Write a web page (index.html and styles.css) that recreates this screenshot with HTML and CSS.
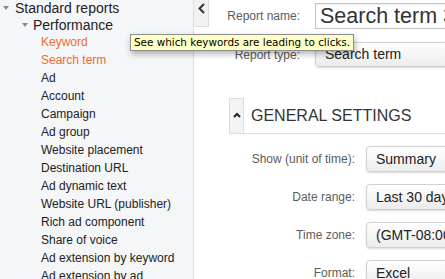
FILE: index.html
```html
<!DOCTYPE html>
<html lang="en">
<head>
  <meta charset="UTF-8" />
  <title>Report settings</title>
  <link rel="stylesheet" href="styles.css">
</head>
<body>
  <div class="page">
    <aside class="sidebar">
      <div class="tree-root"><span class="caret"></span>Standard reports</div>
      <div class="tree-group"><span class="caret"></span>Performance</div>
      <ul class="reports">
        <li class="active">Keyword</li>
        <li class="active">Search term</li>
        <li>Ad</li>
        <li>Account</li>
        <li>Campaign</li>
        <li>Ad group</li>
        <li>Website placement</li>
        <li>Destination URL</li>
        <li>Ad dynamic text</li>
        <li>Website URL (publisher)</li>
        <li>Rich ad component</li>
        <li>Share of voice</li>
        <li>Ad extension by keyword</li>
        <li>Ad extension by ad</li>
      </ul>
    </aside>

    <div class="main">
      <div class="toggle">
        <svg width="14" height="26" viewBox="0 0 14 26">
          <polyline points="10,4 5.5,8.5 10,13" fill="none" stroke="#333" stroke-width="2" />
        </svg>
      </div>

      <div class="content">
        <div class="top-form">
          <label class="label">Report name:</label>
          <input class="name-input" type="text" value="Search term 3">
          <label class="label">Report type:</label>
          <div class="select">Search term</div>
        </div>

        <div class="section">
          <div class="section-head">
            <div class="collapse">
              <svg width="14" height="34" viewBox="0 0 14 34">
                <polyline points="4,18 7,15 10,18" fill="none" stroke="#222" stroke-width="2" />
              </svg>
            </div>
            <h2>GENERAL SETTINGS</h2>
          </div>
          <div class="settings">
            <label class="label">Show (unit of time):</label>
            <div class="select">Summary</div>
            <label class="label">Date range:</label>
            <div class="select">Last 30 days</div>
            <label class="label">Time zone:</label>
            <div class="select">(GMT-08:00) Pacific Time</div>
            <label class="label">Format:</label>
            <div class="select">Excel</div>
          </div>
        </div>
      </div>
    </div>

    <div class="tooltip">See which keywords are leading to clicks.</div>
  </div>
</body>
</html>
```

FILE: styles.css
```css
body {
  margin: 0;
  font-family: 'Liberation Sans', Arial, sans-serif;
  color: #222;
  overflow: hidden;
}
.page {
  position: relative;
  display: flex;
  height: 279px;
  width: 445px;
  overflow: hidden;
}
.sidebar {
  flex: none;
  width: 193px;
  background: #f5f6f8;
  border-right: 1px solid #dcdde0;
}
.caret {
  display: inline-block;
  width: 0;
  height: 0;
  border-left: 3.5px solid transparent;
  border-right: 3.5px solid transparent;
  border-top: 4px solid #8a8a8a;
}
.tree-root {
  display: flex;
  align-items: center;
  height: 17px;
  margin-top: -1px;
  padding-left: 3px;
  font-size: 14px;
}
.tree-root .caret {
  margin-right: 6px;
}
.tree-group {
  display: flex;
  align-items: center;
  height: 17px;
  padding-left: 22px;
  font-size: 14px;
}
.tree-group .caret {
  margin-right: 5px;
}
.reports {
  list-style: none;
  margin: 0;
  padding: 0 0 0 41px;
  font-size: 12px;
  line-height: 18px;
}
.reports li {
  white-space: nowrap;
}
.reports li.active {
  color: #f26a2c;
}
.main {
  flex: 1;
  display: flex;
  min-width: 0;
}
.toggle {
  flex: none;
  align-self: flex-start;
  width: 14px;
  height: 26px;
  background: #f1f2f4;
  border-right: 1px solid #dcdde0;
  border-bottom: 1px solid #dcdde0;
}
.toggle svg {
  display: block;
}
.content {
  flex: 1;
  min-width: 0;
}
.label {
  color: #5c5c5c;
  font-size: 12px;
  text-align: right;
  white-space: nowrap;
}
.top-form {
  display: grid;
  grid-template-columns: 91px 200px;
  column-gap: 15px;
  row-gap: 13px;
  align-items: center;
  padding-top: 3px;
}
.name-input {
  box-sizing: border-box;
  width: 200px;
  height: 26px;
  margin: 0;
  padding: 0 4px;
  border: 1px solid #c4c4c4;
  box-shadow: inset 0 1px 2px rgba(0,0,0,0.08);
  font-family: 'Liberation Sans', Arial, sans-serif;
  font-size: 21.5px;
  color: #333;
}
.select {
  box-sizing: border-box;
  width: 170px;
  height: 25px;
  padding-left: 9px;
  line-height: 23px;
  border: 1px solid #d0d0d0;
  border-radius: 4px;
  background: linear-gradient(#fff, #ececec);
  box-shadow: 0 1px 2px rgba(0,0,0,0.15);
  font-size: 14px;
  color: #222;
  white-space: nowrap;
}
.section {
  margin: 31px 0 0 20px;
}
.section-head {
  display: flex;
  align-items: center;
  border-bottom: 1px solid #dedede;
}
.collapse {
  box-sizing: border-box;
  width: 15px;
  height: 35px;
  background: #f2f3f5;
  border: 1px solid #dcdde0;
  border-bottom: none;
}
.collapse svg {
  display: block;
}
.section-head h2 {
  margin: 0 0 0 7px;
  font-size: 16px;
  font-weight: normal;
  color: #333;
  white-space: nowrap;
}
.settings {
  display: grid;
  grid-template-columns: 126px 170px;
  column-gap: 11px;
  row-gap: 12px;
  align-items: center;
  padding-top: 12px;
}
.settings .select {
  height: 26px;
  line-height: 24px;
}
.tooltip {
  position: absolute;
  left: 130px;
  top: 34px;
  padding: 1px 3px 2px;
  background: #ffffc6;
  border: 1px solid #8d8d8d;
  box-shadow: 1px 3px 6px rgba(0,0,0,0.3);
  font-family: 'DejaVu Sans', sans-serif;
  font-size: 10.4px;
  line-height: 12px;
  color: #000;
  white-space: nowrap;
}
```
